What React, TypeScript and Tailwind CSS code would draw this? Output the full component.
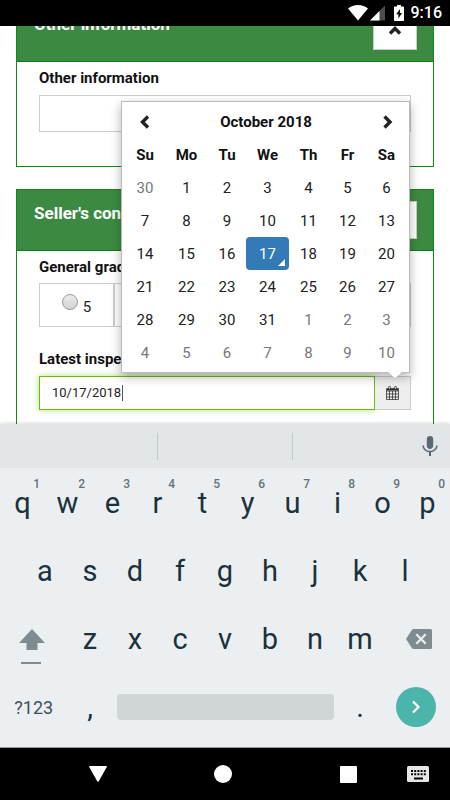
import React, { useState } from 'react';

const weekDays = ['Su', 'Mo', 'Tu', 'We', 'Th', 'Fr', 'Sa'];

const weeks = [
  [30, 1, 2, 3, 4, 5, 6],
  [7, 8, 9, 10, 11, 12, 13],
  [14, 15, 16, 17, 18, 19, 20],
  [21, 22, 23, 24, 25, 26, 27],
  [28, 29, 30, 31, 1, 2, 3],
  [4, 5, 6, 7, 8, 9, 10],
];

const isOtherMonth = (week: number, day: number) =>
  (week === 0 && day > 20) || (week > 3 && day < 15);

const StatusBar: React.FC = () => (
  <header className="flex h-[26px] shrink-0 items-center justify-end bg-black pr-2 text-white">
    <svg className="h-4 w-5" viewBox="0 0 20 16" fill="currentColor">
      <path d="M10 15.5 0 3.6C2.700 1.300 6.200 0 10 0s7.300 1.300 10 3.600z" />
    </svg>
    <svg className="ml-[2px] h-4 w-[15px]" viewBox="0 0 15 16" fill="currentColor">
      <path d="M15 .5V15.500H0z" fillOpacity="0.3" />
      <path d="M9.500 6v9.500H0z" />
    </svg>
    <svg className="ml-[9px] h-4 w-[10px]" viewBox="0 0 10 16">
      <path d="M3 0h4v1.600h2.200c.5 0 .8.300.8.800v12.800c0 .5-.300.800-.800.800H.8c-.500 0-.800-.300-.800-.800V2.400c0-.500.300-.800.800-.800H3z" fill="#fff" />
      <path d="M6 4 2.200 9.300h2.200V13.500L8 8.100H5.900z" fill="#000" />
    </svg>
    <span className="ml-[7px] text-[16px] leading-none font-medium">9:16</span>
  </header>
);

const Chevron: React.FC<{ d: string; className?: string }> = ({ d, className }) => (
  <svg className={className} viewBox="0 0 16 16" fill="none" stroke="#222" strokeWidth="3.4">
    <path d={d} />
  </svg>
);

const Panel: React.FC<{ title: string; children: React.ReactNode }> = ({ title, children }) => (
  <section className="border border-[#158719] bg-white">
    <div className="flex h-[61px] items-start justify-between border-b border-[#0c7d12] bg-[#3c8a42] pt-[11px] pr-4 pl-[17px]">
      <h2 className="text-[17px] leading-6 font-bold text-white">{title}</h2>
      <button
        type="button"
        aria-label="Collapse"
        className="flex h-[38px] w-11 items-center justify-center border border-[#ccc] bg-white"
      >
        <Chevron d="M3 10.500 8 5.500l5 5" className="h-4 w-4" />
      </button>
    </div>
    <div className="px-[22px]">{children}</div>
  </section>
);

const Calendar: React.FC = () => (
  <div className="absolute right-px bottom-full mb-[3px] w-[289px] border border-[#bbb] bg-white p-[3px] shadow-[0_4px_10px_rgba(0,0,0,0.3)]">
    <table className="w-full table-fixed text-center text-[15px] leading-5 text-[#222]">
      <colgroup>
        <col className="w-[40px]" />
        <col className="w-[43px]" />
        <col className="w-[38px]" />
        <col className="w-[43px]" />
        <col />
        <col />
        <col />
      </colgroup>
      <thead className="text-[#111]">
        <tr className="h-[33px]">
          <th>
            <button type="button" aria-label="Previous month" className="flex h-[33px] w-full items-center justify-center">
              <Chevron d="M11 2.500 5.500 8l5.500 5.500" className="h-4 w-4" />
            </button>
          </th>
          <th colSpan={5} className="font-bold">October 2018</th>
          <th>
            <button type="button" aria-label="Next month" className="flex h-[33px] w-full items-center justify-center">
              <Chevron d="M5.500 2.500 11 8l-5.500 5.500" className="h-4 w-4" />
            </button>
          </th>
        </tr>
        <tr className="h-[33px]">
          {weekDays.map((d) => (
            <th key={d} className="font-bold">{d}</th>
          ))}
        </tr>
      </thead>
      <tbody>
        {weeks.map((week, w) => (
          <tr key={w} className="h-[33px]">
            {week.map((day) => {
              const selected = w === 2 && day === 17;
              return (
                <td key={day} className="p-0">
                  <button
                    type="button"
                    className={
                      selected
                        ? 'relative h-[33px] w-full rounded-sm bg-[#337ab7] text-white'
                        : isOtherMonth(w, day)
                          ? 'h-[33px] w-full text-[#777]'
                          : 'h-[33px] w-full'
                    }
                  >
                    {day}
                    {selected && (
                      <span className="absolute right-1 bottom-1 border-b-[7px] border-l-[7px] border-b-white border-l-transparent" />
                    )}
                  </button>
                </td>
              );
            })}
          </tr>
        ))}
      </tbody>
    </table>
    <svg className="absolute top-full right-[6px] h-[7px] w-4" viewBox="0 0 16 7">
      <path d="M0-1h16L8 6.500z" fill="#fff" />
      <path d="M0 0l8 6.500L16 0" fill="none" stroke="#bbb" strokeWidth="0.7" />
    </svg>
  </div>
);

const Form: React.FC = () => {
  const [date, setDate] = useState('10/17/2018');

  return (
    <main className="min-h-0 flex-1 overflow-hidden bg-white">
      <div className="-mt-[26px] flex flex-col gap-[22px] px-4">
        <Panel title="Other information">
          <label htmlFor="other" className="block pt-1 text-[15px] leading-6 font-bold text-[#111]">
            Other information
          </label>
          <input id="other" className="mt-[5px] mb-[34px] block h-[37px] w-full border border-[#ccc] px-3 text-[13px]" />
        </Panel>

        <Panel title="Seller's condition">
          <p className="pt-1 text-[15px] leading-6 font-bold text-[#111]">General grade</p>
          <div className="mt-1 flex h-11 border border-[#ccc]">
            <label className="flex w-[75px] items-center justify-center gap-[5px] border-r-2 border-[#ccc] text-[15px] text-[#222]">
              <input
                type="radio"
                name="grade"
                className="mb-[6px] h-4 w-4 appearance-none rounded-full border border-[#999] bg-linear-to-b from-[#ececec] to-[#d2d2d2]"
              />
              <span className="pt-1">5</span>
            </label>
          </div>
          <label htmlFor="inspection" className="mt-5 block text-[15px] leading-6 font-bold text-[#111]">
            Latest inspection
          </label>
          <div className="relative mt-[5px] mb-10 flex h-[34px]">
            <input
              id="inspection"
              value={date}
              onChange={(e) => setDate(e.target.value)}
              className="min-w-0 flex-1 border border-[#6fb90a] bg-white px-3 text-[13px] text-[#222] shadow-[0_0_6px_rgba(124,200,20,0.6)] outline-none"
            />
            <span className="absolute top-[9px] left-[83px] h-4 w-px bg-[#555]" />
            <button
              type="button"
              aria-label="Open calendar"
              className="flex w-9 items-center justify-center border border-l-0 border-[#ccc] bg-[#eee]"
            >
              <svg className="h-[14px] w-[13px]" viewBox="0 0 13 14" fill="none" stroke="#333">
                <path d="M.5 2.500h12v11H.5zM.5 5h12M.5 8h12M.5 11h12M3.500 5v8.500M6.500 5v8.500M9.500 5v8.500" strokeWidth="0.8" />
                <path d="M1 3.500h11" strokeWidth="2" />
                <path d="M3.500.3v3M9.500.3v3" strokeWidth="2" />
                <path d="M3.500 1v2M9.500 1v2" stroke="#eee" strokeWidth="0.7" />
              </svg>
            </button>
            <Calendar />
          </div>
        </Panel>
      </div>
    </main>
  );
};

const Key: React.FC<{ label: string; hint?: string; className: string }> = ({ label, hint, className }) => (
  <button type="button" className={`relative h-full text-[29px] leading-none text-[#1b313b] ${className}`}>
    {label}
    {hint && (
      <span className="absolute top-[9px] right-[5px] text-[12px] leading-3 font-medium text-[#63737a]">{hint}</span>
    )}
  </button>
);

const Keyboard: React.FC = () => (
  <section className="shrink-0 border-b border-[#999] bg-[#eceff1] pb-[6px] shadow-[0_-1px_3px_rgba(0,0,0,0.15)]">
    <div className="mb-px flex h-11 items-center bg-[#e2e6e9]">
      <div className="h-[27px] w-[35%] border-r border-[#c3c8cb]" />
      <div className="h-[27px] w-[30%] border-r border-[#c3c8cb]" />
      <button type="button" aria-label="Voice input" className="ml-auto mr-2">
        <svg className="h-6 w-6" viewBox="0 0 24 24" fill="#5b6a71">
          <path d="M12 15c1.800 0 3.200-1.400 3.200-3.200V5.200a3.200 3.200 0 0 0-6.400 0v6.600c0 1.800 1.400 3.200 3.200 3.200z" />
          <path d="M18 11.500c0 3.200-2.700 5.300-6 5.300s-6-2.100-6-5.300H4.400c0 3.500 2.900 6.300 6.600 6.800V22h2v-3.700c3.700-.500 6.600-3.300 6.600-6.800z" />
        </svg>
      </button>
    </div>
    <div className="flex h-[68px]">
      {'qwertyuiop'.split('').map((k, i) => (
        <Key key={k} label={k} hint={String((i + 1) % 10)} className="w-[10%]" />
      ))}
    </div>
    <div className="flex h-[68px] justify-center">
      {'asdfghjkl'.split('').map((k) => (
        <Key key={k} label={k} className="w-[10%]" />
      ))}
    </div>
    <div className="flex h-[68px] justify-between">
      <button type="button" aria-label="Shift" className="flex w-[14%] items-center justify-center pt-4">
        <svg className="h-9 w-[26px]" viewBox="0 0 26 36" fill="#7f8b8f">
          <path d="M13 0 26 14h-7.500v7H7.500v-7H0z" />
          <path d="M2 33h20v2H2z" />
        </svg>
      </button>
      <div className="flex w-[70%]">
        {'zxcvbnm'.split('').map((k) => (
          <Key key={k} label={k} className="flex-1" />
        ))}
      </div>
      <button type="button" aria-label="Backspace" className="flex w-[14%] items-center justify-center">
        <svg className="h-5 w-[26px]" viewBox="0 0 26 20">
          <path d="M7.500 0H24.500Q26 0 26 1.500v17Q26 20 24.500 20H7.500Q6.500 20 6 19.200L0 10 6 .8Q6.500 0 7.500 0z" fill="#7f8b8f" />
          <path d="m10.300 5.300 9.400 9.400M19.700 5.300l-9.400 9.400" stroke="#eceff1" strokeWidth="2.200" />
        </svg>
      </button>
    </div>
    <div className="flex h-[68px] items-center">
      <button type="button" className="h-full w-[15%] text-[18px] text-[#3c4f58]">?123</button>
      <Key label="," className="w-[10%]" />
      <div className="w-[50%] px-1">
        <button type="button" aria-label="Space" className="block h-[26px] w-full rounded-sm bg-[#d0d5d8]" />
      </div>
      <Key label="." className="w-[10%]" />
      <div className="flex w-[15%] justify-center">
        <button
          type="button"
          aria-label="Next"
          className="flex h-10 w-10 items-center justify-center rounded-full bg-[#4bb5ab]"
        >
          <svg className="h-[14px] w-[10px]" viewBox="0 0 10 14" fill="none" stroke="#fff" strokeWidth="2.200">
            <path d="m2 1.500 5.500 5.500L2 12.500" />
          </svg>
        </button>
      </div>
    </div>
  </section>
);

const NavBar: React.FC = () => (
  <nav className="flex h-[52px] shrink-0 items-center bg-black pr-2 pl-[74px] text-white">
    <button type="button" aria-label="Back" className="mr-[21%] flex w-12 justify-center">
      <svg className="h-4 w-[18px]" viewBox="0 0 18 16" fill="currentColor">
        <path d="M.8 0h16.400q1.200 0 .6 1L9.600 15.400q-.6.900-1.200 0L.2 1Q-.4 0 .8 0z" />
      </svg>
    </button>
    <button type="button" aria-label="Home" className="mr-[21%] flex w-12 justify-center">
      <span className="h-[18px] w-[18px] rounded-full bg-white" />
    </button>
    <button type="button" aria-label="Recent apps" className="flex w-12 justify-center">
      <span className="h-[17px] w-[17px] rounded-[1px] bg-white" />
    </button>
    <button type="button" aria-label="Switch keyboard" className="ml-auto flex w-12 justify-center">
      <svg className="h-4 w-[22px]" viewBox="0 0 22 16">
        <rect width="22" height="16" rx="1.500" fill="#e6e6e6" />
        <path d="M4 5h15M4 8.300h15" stroke="#000" strokeWidth="2" strokeDasharray="2 1.200" />
        <path d="M7 12.500h9" stroke="#000" strokeWidth="2" />
      </svg>
    </button>
  </nav>
);

const App: React.FC = () => (
  <div className="flex h-screen flex-col overflow-hidden font-[Roboto,sans-serif]">
    <StatusBar />
    <Form />
    <Keyboard />
    <NavBar />
  </div>
);

export default App;
